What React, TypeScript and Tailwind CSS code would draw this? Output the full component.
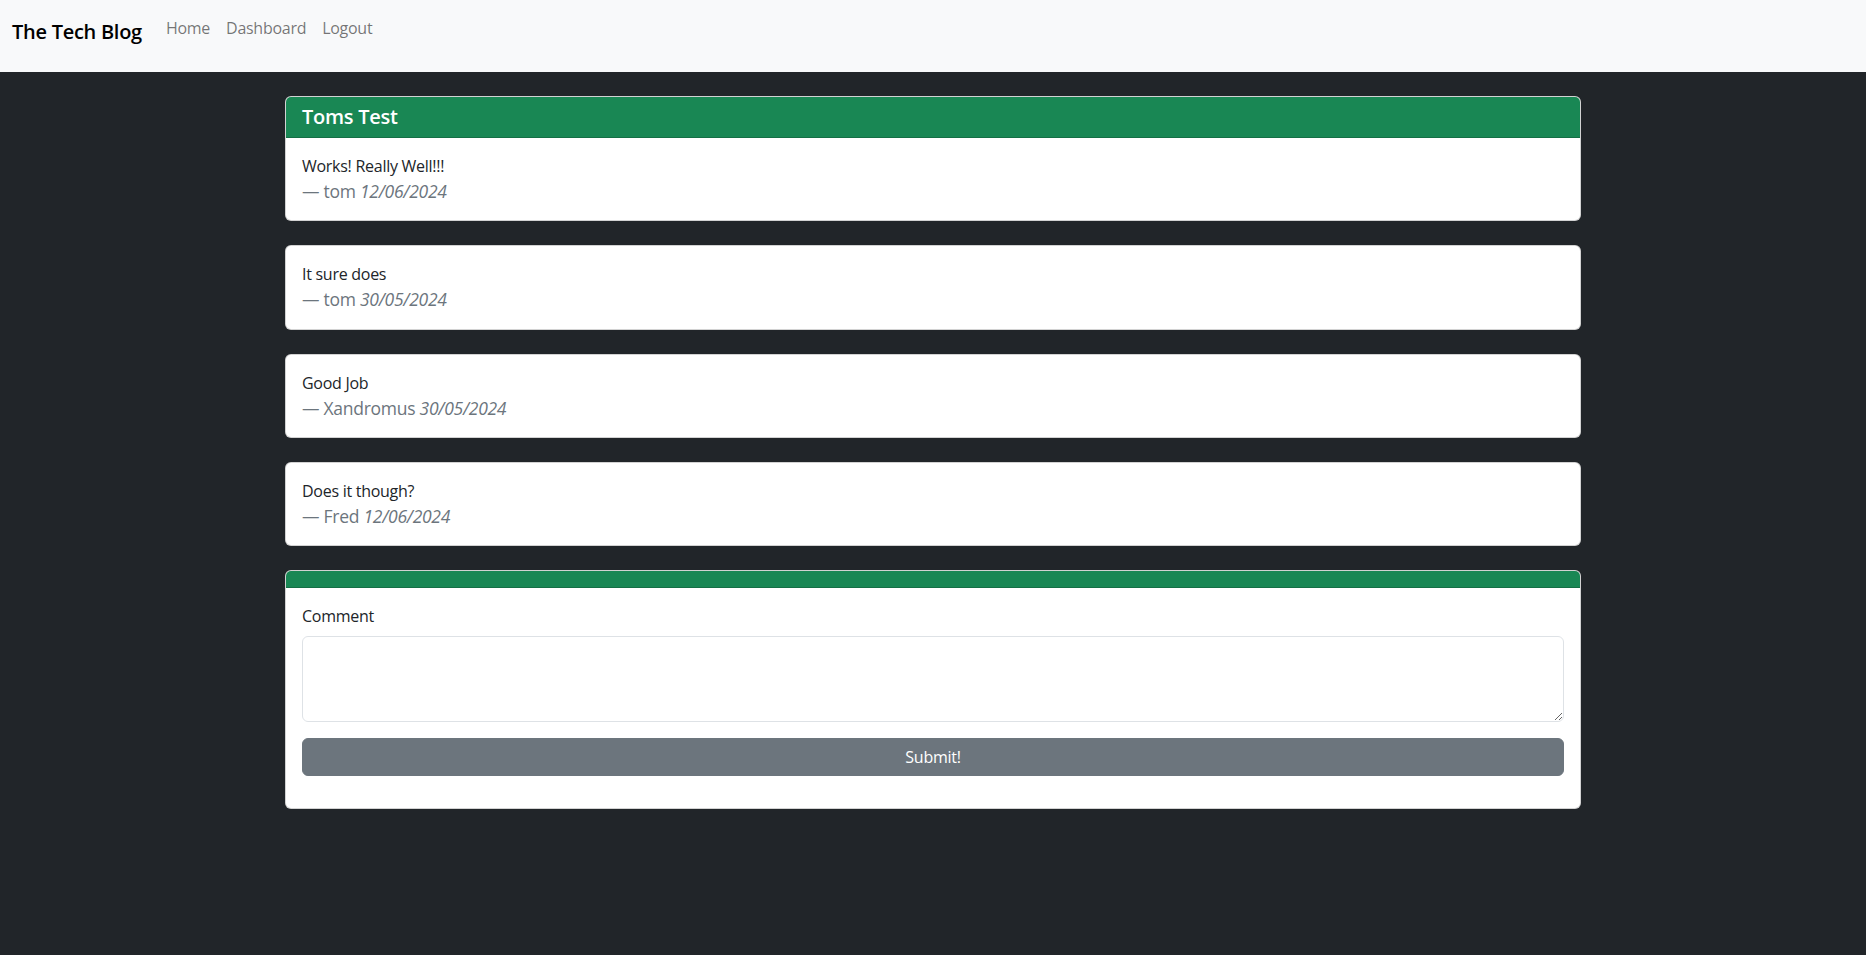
import { useState } from "react";

const COMMENTS = [
  { text: "It sure does", author: "tom", date: "30/05/2024" },
  { text: "Good Job", author: "Xandromus", date: "30/05/2024" },
  { text: "Does it though?", author: "Fred", date: "12/06/2024" },
];

function Byline({ author, date }: { author: string; date: string }) {
  return (
    <p className="text-[17.5px] leading-[26.25px] text-[#6c757d]">
      — {author} <i>{date}</i>
    </p>
  );
}

function CommentCard({ text, author, date }: { text: string; author: string; date: string }) {
  return (
    <div className="mb-6 rounded-md border border-black/[.175] bg-white">
      <div className="p-4">
        <p className="text-base leading-6">{text}</p>
        <Byline author={author} date={date} />
      </div>
    </div>
  );
}

export default function App() {
  const [comment, setComment] = useState("");

  return (
    <div
      className="min-h-screen bg-[#212529] tracking-[-0.017em] text-[#212529]"
      style={{ fontFamily: '"Open Sans", "Noto Sans", sans-serif' }}
    >
      {/* Navbar */}
      <nav className="h-[72px] bg-[#f8f9fa]">
        <div className="flex items-start px-3 pt-4">
          <a href="#" className="mt-px mr-4 text-xl leading-[30px] font-semibold text-black">
            The Tech Blog
          </a>
          <ul className="flex">
            {["Home", "Dashboard", "Logout"].map((l) => (
              <li key={l}>
                <a href="#" className="block px-2 text-base leading-6 text-black/55">
                  {l}
                </a>
              </li>
            ))}
          </ul>
        </div>
      </nav>

      <main className="mx-auto max-w-[1320px] px-3 pt-6">
        {/* Post */}
        <div className="mb-6 overflow-hidden rounded-md border border-black/[.175] bg-white">
          <div className="border-b border-black/[.175] bg-[#198754] px-4 py-2">
            <h5 className="text-xl leading-6 font-semibold text-white">Toms Test</h5>
          </div>
          <div className="p-4">
            <p className="text-base leading-6">Works! Really Well!!!</p>
            <Byline author="tom" date="12/06/2024" />
          </div>
        </div>

        {COMMENTS.map((c) => (
          <CommentCard key={c.text} {...c} />
        ))}

        {/* New comment */}
        <div className="mb-6 overflow-hidden rounded-md border border-black/[.175] bg-white">
          <div className="h-[17px] border-b border-black/[.175] bg-[#198754]" />
          <form className="p-4" onSubmit={(e) => e.preventDefault()}>
            <div className="mb-4">
              <label htmlFor="comment" className="mb-2 block text-base leading-6">
                Comment
              </label>
              <textarea
                id="comment"
                rows={3}
                value={comment}
                onChange={(e) => setComment(e.target.value)}
                className="block w-full rounded-md border border-[#dee2e6] px-3 py-1.5 text-base leading-6 outline-none"
              />
            </div>
            <div className="mb-4">
              <button
                type="submit"
                className="w-full rounded-md border border-[#6c757d] bg-[#6c757d] px-3 py-1.5 text-base leading-6 text-white"
              >
                Submit!
              </button>
            </div>
          </form>
        </div>
      </main>
    </div>
  );
}
